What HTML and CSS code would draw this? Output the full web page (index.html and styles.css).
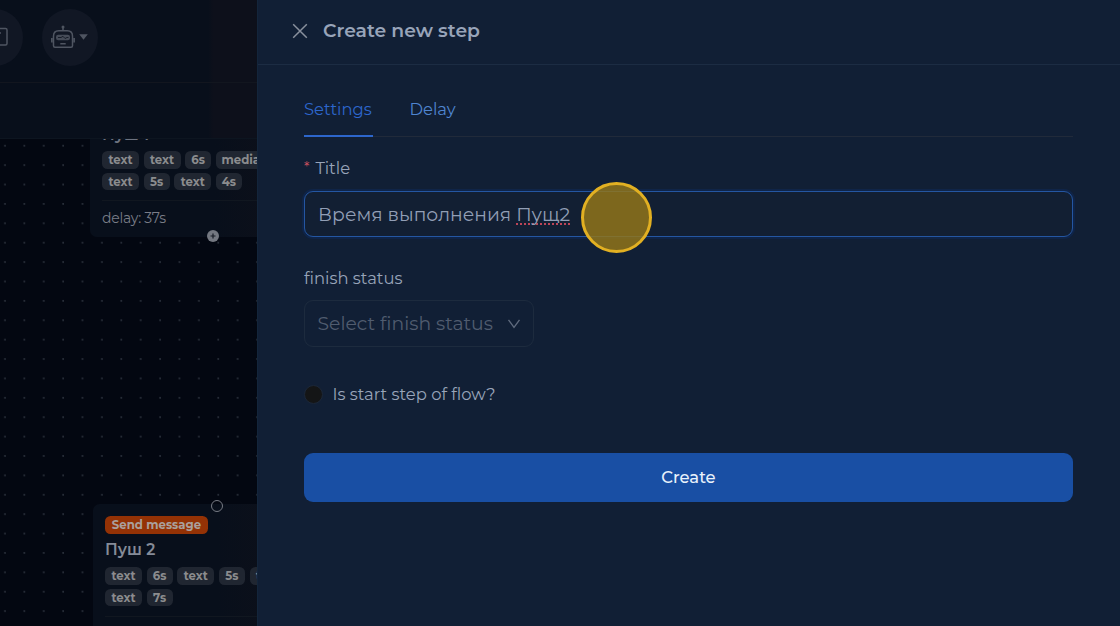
FILE: index.html
```html
<!DOCTYPE html>
<html lang="en">
<head>
<meta charset="utf-8">
<title>Create new step</title>
<link rel="stylesheet" href="styles.css">
</head>
<body>
<div class="app">
  <main class="editor">
    <header class="toolbar">
      <div class="round-button round-button-cut">
        <svg width="20" height="20" viewBox="0 0 20 20"><rect x="1.5" y="1.5" width="16.5" height="16.5" rx="1.5"/><path d="M7 6h5"/></svg>
      </div>
      <div class="round-button">
        <svg width="24" height="24" viewBox="0 0 24 24"><circle cx="12" cy="2" r="1.500" class="fill"/><path d="M12 2.5v3.2M2.5 20.7V11.200c0-3.200 2-5.400 5.200-5.400h8.600c3.200 0 5.200 2.200 5.200 5.400v9.500c0 1-.5 1.500-1.500 1.500H4c-1 0-1.500-.5-1.500-1.500zM.8 13v4.500M23.200 13v4.500M9.300 18.800h5.400"/><rect x="5" y="9.700" width="14" height="5.600" rx="2.200" class="soft"/><path d="M7 12.500h3l2-1.200 2 2.200 2-1h1.500" class="thin"/></svg>
        <svg class="caret" width="9" height="6" viewBox="0 0 9 6"><path d="M.2.300h8.600L4.500 5.800z" class="fill"/></svg>
      </div>
    </header>
    <div class="subbar"></div>
    <section class="canvas">
      <article class="node node-first">
        <h3 class="node-title">Пуш 1</h3>
        <div class="tags"><span class="tag w-text">text</span><span class="tag w-text">text</span><span class="tag w-num">6s</span><span class="tag w-media">media</span></div>
        <div class="tags"><span class="tag w-text">text</span><span class="tag w-num">5s</span><span class="tag w-text">text</span><span class="tag w-num">4s</span></div>
        <p class="delay">delay: 37s</p>
        <span class="port-add"><svg width="12" height="12" viewBox="0 0 12 12"><path d="M6 3.500v5M3.500 6h5"/></svg></span>
      </article>
      <article class="node node-second">
        <span class="port"></span>
        <span class="kind">Send message</span>
        <h3 class="node-title">Пуш 2</h3>
        <div class="tags"><span class="tag w-text">text</span><span class="tag w-num">6s</span><span class="tag w-text">text</span><span class="tag w-num">5s</span><span class="tag w-text">text</span></div>
        <div class="tags"><span class="tag w-text">text</span><span class="tag w-num">7s</span></div>
        <p class="delay"></p>
      </article>
    </section>
  </main>
  <aside class="drawer">
    <header class="drawer-head">
      <svg width="16" height="16" viewBox="0 0 16 16"><path d="M1.200 1.200l13.600 13.600M14.800 1.200L1.200 14.800"/></svg>
      <h2 class="drawer-title">Create new step</h2>
    </header>
    <form class="drawer-body">
      <nav class="tabs"><span class="tab tab-active">Settings</span><span class="tab">Delay</span></nav>
      <label class="label label-title"><span class="required">*</span><span>Title</span></label>
      <div class="input"><span class="value">Время выполнения <span class="misspelled">Пущ2</span></span><span class="click-marker"></span></div>
      <label class="label label-status"><span>finish status</span></label>
      <div class="select"><span>Select finish status</span><svg width="14" height="12" viewBox="0 0 14 12"><path d="M1.500 1.800L7 9.500l5.500-7.700"/></svg></div>
      <div class="check"><span class="check-dot"></span><span>Is start step of flow?</span></div>
      <button class="create" type="button">Create</button>
    </form>
  </aside>
</div>
</body>
</html>
```
FILE: styles.css
```css
* { box-sizing: border-box; }
body { margin: 0; background: #030711; font-family: Montserrat, Inter, "Noto Sans", sans-serif; }
h2, h3, p { margin: 0; }
svg { display: block; flex: none; fill: none; }
.app { display: flex; width: 1120px; height: 626px; overflow: hidden; }
.editor { width: 257px; flex: none; display: flex; flex-direction: column; overflow: hidden; }
.toolbar { height: 83px; flex: none; display: flex; gap: 19px; padding: 9px 0 0 0; background: linear-gradient(90deg, #080f1b 81%, #0d101b 83%); border-bottom: 1px solid #12161f; }
.round-button { width: 56px; height: 57px; flex: none; border-radius: 50%; background: #111724; display: flex; align-items: center; padding: 0 0 2px 9px; gap: 4px; stroke: #4f5561; stroke-width: 1.500; }
.round-button-cut { margin-left: -33px; padding-left: 22px; }
.round-button .fill { fill: #4f5561; stroke: none; }
.round-button .soft { fill: #464c58; stroke: none; }
.round-button .thin { stroke: #171d29; stroke-width: 1; }
.subbar { height: 56px; flex: none; background: linear-gradient(90deg, #080f1b 81%, #0d101b 83%); border-bottom: 1px solid #0d1520; }
.canvas { flex: 1; position: relative; overflow: hidden; background: radial-gradient(circle at 5px 6.700px, #282e39 0, #282e39 .6px, transparent 1.200px) 0 0 / 19.400px 19.400px #030711; }
.node { position: absolute; background: linear-gradient(90deg, #080f1b 50%, #0d101a 75%); border-radius: 7px; width: 250px; color: #7d8189; }
.node-first { left: 90px; top: -55px; height: 153px; padding: 41px 12px 0; }
.node-second { left: 93px; top: 365px; height: 160px; padding: 12px 12px 0; }
.node-title { font-size: 15.600px; line-height: 20px; font-weight: 600; color: #858b98; }
.node-first .node-title { margin-bottom: 6px; color: #6d7380; }
.node-second .node-title { margin: 6px 0 7.500px; }
.tags { display: flex; gap: 4.500px; margin-bottom: 4px; }
.tag { height: 17.500px; flex: none; border-radius: 5.500px; background: #202631; font-size: 11.700px; line-height: 18px; font-weight: 700; text-align: center; color: #8b8c8e; }
.w-text { width: 37px; }
.w-num { width: 26.300px; }
.w-media { width: 50px; }
.delay { margin-top: 10px; border-top: 1px solid #111720; padding-top: 8px; font-size: 14px; line-height: 19px; letter-spacing: -.25px; color: #7a7d87; }
.port-add { position: absolute; left: 117px; top: 146px; width: 12px; height: 12px; border-radius: 50%; background: #747881; stroke: #171c26; stroke-width: 1.200; }
.port { position: absolute; left: 118px; top: -4px; width: 12px; height: 12px; border-radius: 50%; border: 1px solid #777b84; }
.kind { display: block; width: 103px; height: 17.500px; border-radius: 5.500px; background: #943205; color: #aaa09c; font-size: 11.700px; line-height: 18px; font-weight: 700; text-align: center; }
.drawer { flex: 1; background: #111f35; color: #98a4b9; border-left: 1px solid #13253b; }
.drawer-head { height: 65px; border-bottom: 1px solid #1c2c43; display: flex; align-items: center; gap: 15.500px; padding: 0 0 2px 33.500px; stroke: #89909d; stroke-width: 1.500; }
.drawer-title { font-size: 18.750px; line-height: 24px; font-weight: 600; stroke: none; }
.drawer-body { padding: 26px 47px 0 46px; }
.tabs { height: 46px; display: flex; gap: 37px; border-bottom: 1px solid #212a3a; }
.tab { font-size: 16.400px; line-height: 37px; height: 46px; color: #4f85d0; }
.tab-active { color: #2d66cc; border-bottom: 2px solid #2d66cc; width: 68.500px; }
.label { display: flex; font-size: 16.400px; line-height: 22px; }
.label-title { margin-top: 20px; gap: 6px; }
.required { color: #ca4f5e; font-size: 14px; line-height: 21px; }
.input { position: relative; margin-top: 12px; height: 46px; border: 1px solid #2456a2; border-radius: 9px; box-shadow: 0 0 0 2px #0f2448; padding: 2px 0 0 13px; display: flex; align-items: center; background: #121f33; }
.value { font-size: 18.750px; line-height: 30px; color: #919eb5; white-space: pre; }
.misspelled { text-decoration: underline dotted #bd4558 2px; text-underline-offset: 2px; text-decoration-skip-ink: none; }
.click-marker { position: absolute; left: 276px; top: -10px; width: 71px; height: 71px; border-radius: 50%; border: 3px solid #e2b022; background: rgba(149, 120, 24, .82); }
.label-status { margin-top: 30px; }
.select { margin-top: 11px; width: 230px; height: 47px; border: 1px solid #1d2b3e; border-radius: 9px; display: flex; align-items: center; justify-content: space-between; padding: 0 12px 0 12.500px; font-size: 18.800px; color: #505c6f; stroke: #606b7e; stroke-width: 1.300; }
.select span { stroke: none; }
.check { display: flex; align-items: center; gap: 9.500px; margin-top: 36px; height: 22px; font-size: 16.400px; }
.check-dot { width: 19px; height: 19px; border-radius: 50%; background: #141516; border: 1px solid #1c2738; }
.create { display: block; width: 100%; height: 49px; margin-top: 48px; border: 0; border-radius: 9px; background: #194fa4; color: #e9f2fb; font: 500 16.400px Montserrat, Inter, sans-serif; padding: 0 0 1px; }
```
